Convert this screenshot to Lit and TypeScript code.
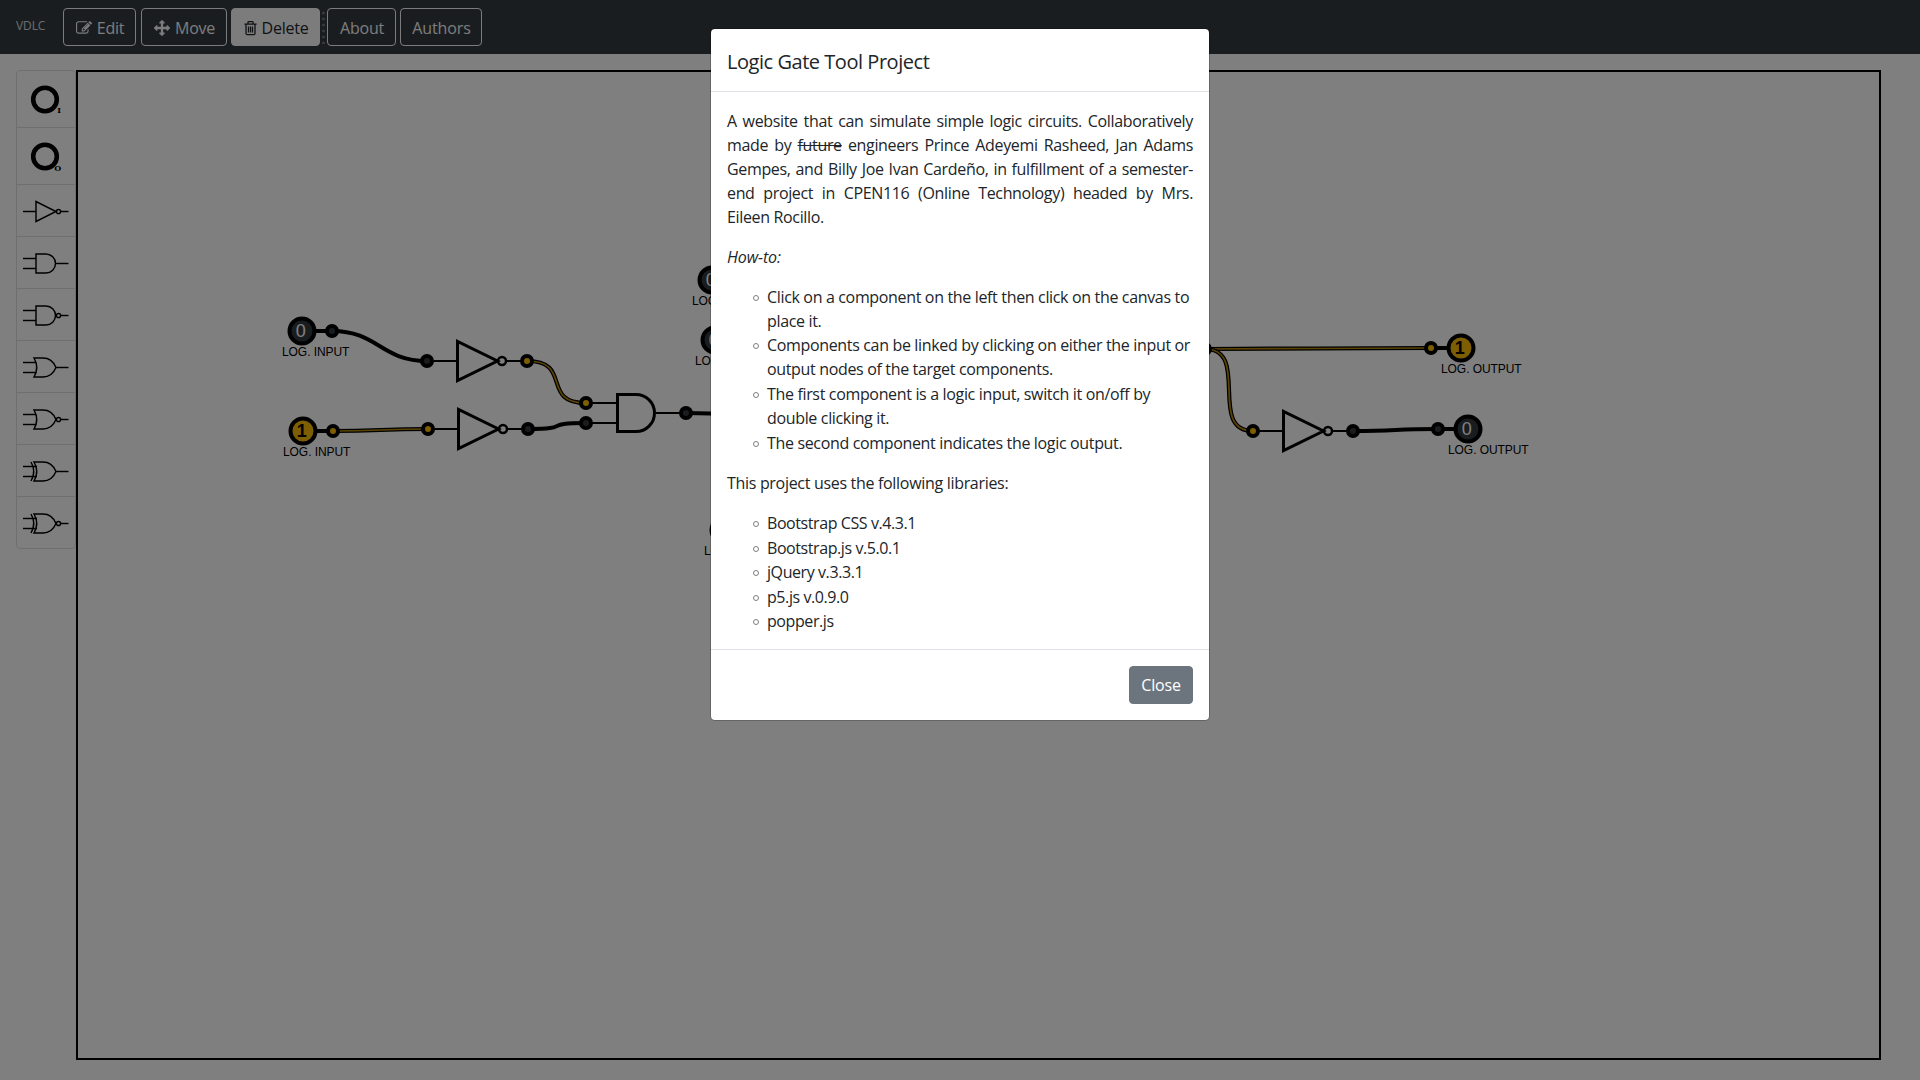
import { LitElement, html, css, svg } from "lit";
import { customElement } from "lit/decorators.js";

type Pt = [number, number];

const GOLD = "#fcbc04";
const DARK = "#343a40";

const editIcon = html`<svg class="ico" style="width:16px" viewBox="0 0 1792 1792"><path fill="currentColor" d="M888 1184l116-116-152-152-116 116v56h96v96h56zm440-720q-16-16-33 1l-350 350q-17 17-1 33t33-1l350-350q17-17 1-33zm80 594v190q0 119-84.500 203.500t-203.500 84.500h-832q-119 0-203.500-84.500t-84.500-203.500v-832q0-119 84.500-203.500t203.500-84.500h832q63 0 117 25 15 7 18 23 3 17-9 29l-49 49q-14 14-32 8-23-6-45-6h-832q-66 0-113 47t-47 113v832q0 66 47 113t113 47h832q66 0 113-47t47-113v-126q0-13 9-22l64-64q15-15 35-7t20 29zm-96-738l288 288-672 672h-288v-288zm444 132l-92 92-288-288 92-92q28-28 68-28t68 28l152 152q28 28 28 68t-28 68z"/></svg>`;
const moveIcon = html`<svg class="ico" style="width:16px" viewBox="0 0 1792 1792"><path fill="currentColor" d="M1792 896q0 26-19 45l-256 256q-19 19-45 19t-45-19-19-45v-128h-384v384h128q26 0 45 19t19 45-19 45l-256 256q-19 19-45 19t-45-19l-256-256q-19-19-19-45t19-45 45-19h128v-384h-384v128q0 26-19 45t-45 19-45-19l-256-256q-19-19-19-45t19-45l256-256q19-19 45-19t45 19 19 45v128h384v-384h-128q-26 0-45-19t-19-45 19-45l256-256q19-19 45-19t45 19l256 256q19 19 19 45t-19 45-45 19h-128v384h384v-128q0-26 19-45t45-19 45 19l256 256q19 19 19 45z"/></svg>`;
const trashIcon = html`<svg class="ico" style="width:13px" viewBox="0 0 13 16"><path fill="none" stroke="currentColor" stroke-width="1.300" d="M.4 4.200h12.200M4 4V2.300q0-.7.700-.7h3.600q.7 0 .7.700V4M2 4.500v8.800q0 1.300 1.100 1.300h6.800q1.100 0 1.100-1.300V4.500M4.500 6.500v6M6.500 6.500v6M8.500 6.500v6"/></svg>`;

const stub = (x1: number, y: number, x2: number) => svg`<path d="M${x1} ${y}H${x2}"/>`;
const body: Record<string, unknown> = {
  not: svg`${stub(0, 15.500, 13)}<path d="M13 5.500V25.500L33 15.500Z"/>`,
  and: svg`${stub(0, 10.500, 13)}${stub(0, 20.500, 13)}<path d="M13 6H23a9.500 9.500 0 0 1 0 19H13Z"/>`,
  or: svg`${stub(0, 10.500, 13)}${stub(0, 20.500, 13)}<path d="M11 6H20Q29 6 33 15.500Q29 25 20 25H11Q16.500 15.500 11 6Z"/>`,
  xor: svg`${stub(0, 10.500, 14)}${stub(0, 20.500, 14)}<path d="M11 6H20Q29 6 33 15.500Q29 25 20 25H11Q16.500 15.500 11 6ZM8 6Q13.500 15.500 8 25"/>`,
};
const gateIcon = (kind: string, inverted: boolean) => html`<svg class="gate" viewBox="0 0 46 31">
  ${body[kind]}
  ${inverted ? svg`<circle cx="35.500" cy="15.500" r="2.100"/>${stub(38, 15.500, 45.500)}` : stub(33, 15.500, 45.500)}
</svg>`;
const ringIcon = (letter: string) => html`<svg class="ring" viewBox="0 0 46 32">
  <circle cx="22" cy="15.500" r="11.800"/>
  <text x=${letter === "I" ? 36 : 34.700} y=${letter === "I" ? 29 : 30}>${letter}</text>
</svg>`;

const pin = ([x, y]: Pt, on: boolean) => svg`<circle cx=${x} cy=${y} r="5" fill=${on ? GOLD : DARK} stroke="#000" stroke-width="4"/>`;
const terminal = (x: number, y: number, on: boolean, label: string, lx: number, ly: number) => svg`
  <circle cx=${x} cy=${y} r="12.500" fill=${on ? GOLD : DARK} stroke="#000" stroke-width="4"/>
  <text class=${on ? "bit on" : "bit"} x=${x - 1.300} y=${y + 6.300}>${on ? "1" : "0"}</text>
  <text class="lbl" x=${lx} y=${ly}>${label}</text>`;
const wire = ([x1, y1]: Pt, [x2, y2]: Pt, on: boolean) => {
  const reach = 46;
  const d = `M${x1} ${y1}C${x1 + reach} ${y1} ${x2 - reach} ${y2} ${x2} ${y2}`;
  return on
    ? svg`<path class="w" d=${d} stroke-width="4.200"/><path class="w gold" d=${d} stroke-width="1.700"/>`
    : svg`<path class="w" d=${d} stroke-width="4"/>`;
};
const notGate = (x: number, y: number, inOn: boolean) => svg`
  <path class="w" stroke-width="2" d="M${x} ${y}h30M${x + 80} ${y}h18"/>
  <path class="w" stroke-width="3" d="M${x + 30.500} ${y - 19.500}v39L${x + 70.500} ${y}Z"/>
  <circle cx=${x + 75} cy=${y} r="4" fill="none" stroke="#000" stroke-width="2.500"/>
  ${pin([x, y], inOn)}${pin([x + 100, y], !inOn)}`;

@customElement("logic-canvas")
export class LogicCanvas extends LitElement {
  static styles = css`
    :host { display: block; flex: 1; box-sizing: border-box; border: 2px solid #000; overflow: hidden; }
    svg { display: block; width: 1801px; height: 986px; }
    .w { fill: none; stroke: #000; }
    .gold { stroke: #b58604; }
    .lbl { font: 12px "Liberation Sans", Arial, sans-serif; fill: #000; letter-spacing: -.07px; }
    .bit { font: 18px "Liberation Sans", Arial, sans-serif; fill: #fff; text-anchor: middle; }
    .on { font-weight: 700; fill: #000; }
  `;
  render() {
    return html`<svg viewBox="78 72 1801 986">
      ${wire([332, 331], [427, 361], false)}
      ${wire([333, 431], [428, 429], true)}
      ${wire([527, 361], [586, 403], true)}
      ${wire([528, 429], [586, 423], false)}
      ${wire([686, 413], [786, 417], false)}
      ${wire([1205, 349], [1431, 348], true)}
      ${wire([1205, 349], [1253, 431], true)}
      ${wire([1353, 431], [1438, 429], false)}
      <path class="w" stroke-width="4" d="M314 331H326M315 431H327M1437 348H1448M1444 429H1455"/>
      <path class="w" stroke-width="2" d="M592 403H617M592 423H617M656 413H680"/>
      <path class="w" stroke-width="3" d="M617.500 394.500H636a18.500 18.500 0 0 1 0 37H617.500Z"/>
      ${notGate(427, 361, false)} ${notGate(428, 429, true)} ${notGate(1253, 431, true)}
      ${pin([332, 331], false)} ${pin([333, 431], true)}
      ${pin([586, 403], true)} ${pin([586, 423], false)} ${pin([686, 413], false)}
      ${pin([1205, 349], true)} ${pin([1431, 348], true)} ${pin([1438, 429], false)}
      ${terminal(302, 331, false, "LOG. INPUT", 282, 356)}
      ${terminal(303, 431, true, "LOG. INPUT", 283, 456)}
      ${terminal(712, 280, false, "LOG. INPUT", 692, 305)}
      ${terminal(715, 340, false, "LOG. INPUT", 695, 365)}
      ${terminal(724, 530, false, "LOG. INPUT", 704, 555)}
      ${terminal(1461, 348, true, "LOG. OUTPUT", 1441, 373)}
      ${terminal(1468, 429, false, "LOG. OUTPUT", 1448, 454)}
    </svg>`;
  }
}

@customElement("about-dialog")
export class AboutDialog extends LitElement {
  static styles = css`
    :host { display: block; box-sizing: border-box; width: 500px; background: #fff; background-clip: padding-box;
      border: 1px solid rgba(0,0,0,.2); border-radius: 5px; color: #212529; }
    .head { padding: 18px 16px 14px; border-bottom: 1px solid #dee2e6; }
    h5 { margin: 0; font-size: 20px; line-height: 30px; font-weight: 400; letter-spacing: -.46px; }
    .body { padding: 17px 16px 15px; letter-spacing: -.34px; }
    p { margin: 0 0 16px; }
    .intro { text-align: justify; }
    .howto { letter-spacing: -.1px; }
    ul { margin: -.7px 0 16.700px; padding: 0 0 0 40px; list-style: none; }
    ul:last-child { margin-bottom: .7px; }
    li { padding-top: .55px; display: flex; }
    .libs { letter-spacing: -.42px; }
    p.libs { letter-spacing: -.31px; }
    li::before { content: ""; flex: none; box-sizing: border-box; width: 6px; height: 6px; margin: 10px 8px 0 -14px;
      border: 1px solid #7b8085; border-radius: 50%; }
    .line { display: block; white-space: nowrap; }
    .foot { display: flex; justify-content: flex-end; padding: 16px; border-top: 1px solid #dee2e6; }
    button { font: inherit; letter-spacing: -.2px; width: 64px; height: 38px; padding: 0; color: #fff; background: #6c757d;
      border: 1px solid #6c757d; border-radius: 4px; }
  `;
  private steps = [
    ["Click on a component on the left then click on the canvas to", "place it."],
    ["Components can be linked by clicking on either the input or", "output nodes of the target components."],
    ["The first component is a logic input, switch it on/off by", "double clicking it."],
    ["The second component indicates the logic output."],
  ];
  private libs = ["Bootstrap CSS v.4.3.1", "Bootstrap.js v.5.0.1", "jQuery v.3.3.1", "p5.js v.0.9.0", "popper.js"];
  render() {
    return html`
      <div class="head"><h5>Logic Gate Tool Project</h5></div>
      <div class="body">
        <p class="intro">A website that can simulate simple logic circuits. Collaboratively made by <s>future</s> engineers Prince Adeyemi Rasheed, Jan Adams Gempes, and Billy Joe Ivan Cardeño, in fulfillment of a semester-end project in CPEN116 (Online Technology) headed by Mrs. Eileen Rocillo.</p>
        <p class="howto"><i>How-to:</i></p>
        <ul>${this.steps.map((s) => html`<li><div>${s.map((l) => html`<span class="line">${l}</span>`)}</div></li>`)}</ul>
        <p class="libs">This project uses the following libraries:</p>
        <ul class="libs">${this.libs.map((l) => html`<li>${l}</li>`)}</ul>
      </div>
      <div class="foot"><button>Close</button></div>`;
  }
}

@customElement("app-root")
export class AppRoot extends LitElement {
  static styles = css`
    :host { display: flex; flex-direction: column; position: relative; width: 1920px; height: 1080px; overflow: hidden;
      background: #fff; font: 16px/24px "Open Sans", "Noto Sans", sans-serif; }
    .nav { display: flex; align-items: center; height: 54px; flex: none; box-sizing: border-box; padding-left: 16px; background: #343a40; }
    .brand { width: 47px; font-size: 12px; color: #fff; opacity: .8; margin-top: -2px; letter-spacing: -.1px; }
    .btn { box-sizing: border-box; display: flex; align-items: center; justify-content: center; gap: 5px; height: 38px;
      border: 1px solid #f8f9fa; border-radius: 4px; background: none; color: #f8f9fa; font: inherit; padding: 2px 0 0 1px; letter-spacing: -.25px; }
    .edit { width: 73px; margin-right: 5px; }
    .move { width: 86px; margin-right: 4px; }
    .del { width: 89px; background: #f8f9fa; color: #212529; }
    .sep { width: 3px; height: 34px; margin: 0 2px; background: radial-gradient(circle, #6a7077 1.300px, transparent 1.700px) 0 0 / 3px 6px; }
    .about { width: 69px; margin-right: 4px; }
    .auth { width: 82px; letter-spacing: -.1px; }
    .ico { height: 16px; flex: none; }
    .main { display: flex; flex: 1; padding: 16px 39px 20px 16px; align-items: stretch; }
    .tools { width: 60px; box-sizing: border-box; align-self: flex-start; border: 1px solid rgba(0,0,0,.125); border-radius: 4px; }
    .tool { display: flex; justify-content: center; align-items: center; box-sizing: border-box; height: 52px; padding-top: 2px; border-bottom: 1px solid rgba(0,0,0,.125); }
    .tool.big { height: 57px; }
    .tool:last-child { border-bottom: 0; height: 51px; }
    .gate { width: 46px; height: 31px; fill: none; stroke: #000; stroke-width: 1.450; }
    .ring { width: 46px; height: 32px; fill: none; stroke: #000; stroke-width: 4.600; }
    .ring text { font: bold 8px "DejaVu Serif", serif; fill: #000; stroke: none; text-anchor: middle; }
    .backdrop { position: absolute; inset: 0; background: rgba(0,0,0,.5); display: flex; justify-content: center; align-items: flex-start; padding-top: 28px; }
  `;
  private gates: [string, boolean][] = [["not", true], ["and", false], ["and", true], ["or", false], ["or", true], ["xor", false], ["xor", true]];
  render() {
    return html`
      <div class="nav">
        <span class="brand">VDLC</span>
        <button class="btn edit">${editIcon}Edit</button>
        <button class="btn move">${moveIcon}Move</button>
        <button class="btn del">${trashIcon}Delete</button>
        <span class="sep"></span>
        <button class="btn about">About</button>
        <button class="btn auth">Authors</button>
      </div>
      <div class="main">
        <div class="tools">
          <div class="tool big">${ringIcon("I")}</div>
          <div class="tool big">${ringIcon("O")}</div>
          ${this.gates.map(([k, inv]) => html`<div class="tool">${gateIcon(k, inv)}</div>`)}
        </div>
        <logic-canvas></logic-canvas>
      </div>
      <div class="backdrop"><about-dialog></about-dialog></div>`;
  }
}
